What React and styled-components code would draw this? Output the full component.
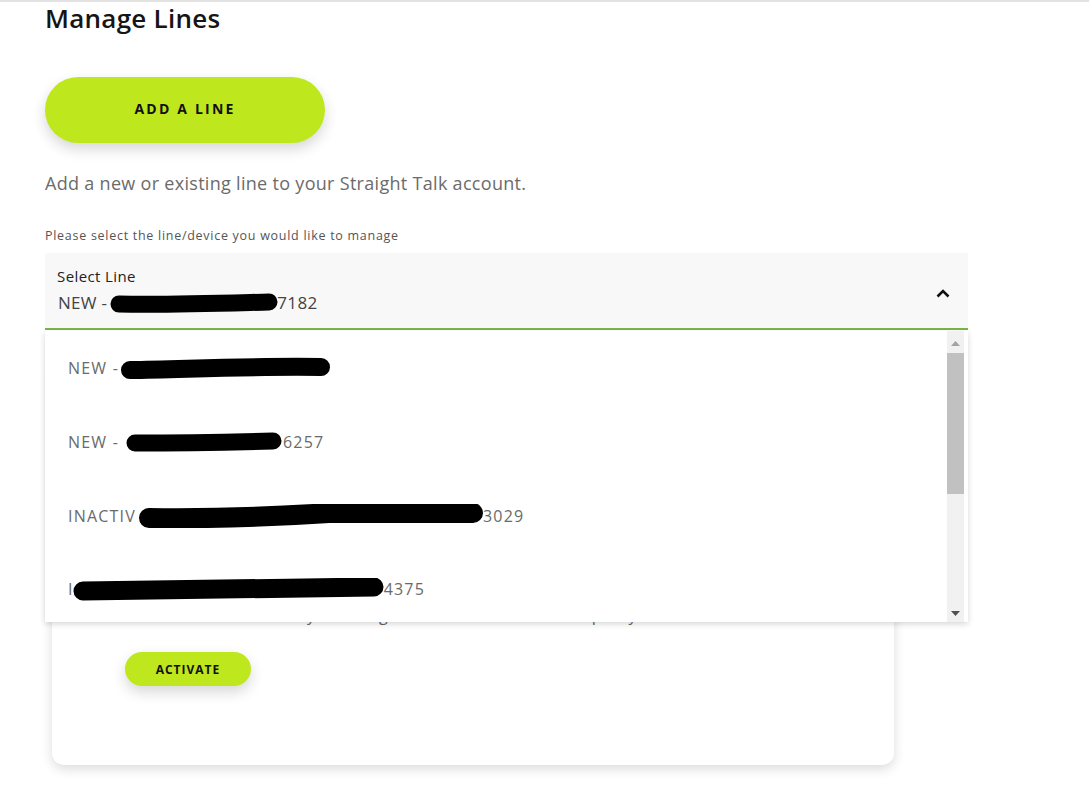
import React from "react";
import styled, { createGlobalStyle } from "styled-components";

const GlobalStyle = createGlobalStyle`
  body {
    margin: 0;
    background: #ffffff;
    font-family: "Open Sans", "Noto Sans", sans-serif;
  }
`;

const Page = styled.div`
  border-top: 2px solid #e2e2e2;
  padding-left: 45px;
  width: 1089px;
  height: 786px;
  box-sizing: border-box;
  overflow: hidden;
`;

const Title = styled.h1`
  margin: 0;
  font-size: 26px;
  line-height: 32px;
  font-weight: 600;
  letter-spacing: 0.25px;
  color: #151515;
`;

const PillButton = styled.button`
  display: flex;
  align-items: center;
  justify-content: center;
  width: ${(p) => p.$width}px;
  height: ${(p) => p.$height}px;
  margin-top: ${(p) => p.$top}px;
  padding: 0 0 ${(p) => p.$lift || 0}px;
  border: none;
  border-radius: ${(p) => p.$height / 2}px;
  background: #bfe71d;
  color: #111;
  font-family: inherit;
  font-weight: 700;
  font-size: ${(p) => p.$size}px;
  letter-spacing: ${(p) => p.$spacing}px;
  box-shadow: 0 6px 14px rgba(0, 0, 0, 0.16);
  cursor: pointer;
`;

const Description = styled.p`
  margin: 28px 0 0;
  font-size: 18px;
  line-height: 24px;
  letter-spacing: 0.3px;
  color: #6b6b6b;
`;

const FieldHint = styled.div`
  margin-top: 33px;
  font-size: 12.5px;
  line-height: 16px;
  letter-spacing: 0.72px;
  color: #555;
`;

const SelectWrap = styled.div`
  position: relative;
  width: 923px;
  margin-top: 9px;
`;

const SelectBox = styled.div`
  display: flex;
  align-items: center;
  height: 75px;
  padding: 0 18px 0 12px;
  background: #f8f8f8;
  border-bottom: 2px solid #78b545;
`;

const SelectText = styled.div`
  flex: 1;
  display: flex;
  flex-direction: column;
  gap: 5px;
`;

const SelectLabel = styled.div`
  font-size: 15px;
  line-height: 20px;
  letter-spacing: 0.4px;
  color: #222;
`;

const SelectValue = styled.div`
  display: flex;
  align-items: center;
  font-size: 17px;
  line-height: 24px;
  letter-spacing: 0.3px;
  color: #444;
  padding-left: 1px;
`;

const Chevron = styled.svg`
  margin-top: 5px;
`;

const Dropdown = styled.div`
  position: absolute;
  top: calc(100% + 1px);
  left: 0;
  right: 0;
  height: 291px;
  display: flex;
  background: #fff;
  box-shadow: 0 2px 6px rgba(0, 0, 0, 0.16);
  z-index: 2;
`;

const OptionList = styled.ul`
  flex: 1;
  list-style: none;
  margin: 0;
  padding: 0;
`;

const Option = styled.li`
  display: flex;
  align-items: center;
  height: ${(p) => (p.$short ? 72 : 74)}px;
  padding-left: 23px;
  font-size: 16px;
  letter-spacing: 1.2px;
  color: #6a6a6a;
`;

const Scrollbar = styled.div`
  width: 17px;
  margin-right: 4px;
  display: flex;
  flex-direction: column;
  background: #f1f1f1;
`;

const ScrollArrow = styled.div`
  height: 17px;
  display: flex;
  align-items: center;
  justify-content: center;
  margin-top: ${(p) => p.$top || 0}px;
`;

const ScrollThumb = styled.div`
  height: 141px;
  margin-top: 1px;
  background: #c1c1c1;
`;

const ScrollTrack = styled.div`
  flex: 1;
`;

const Card = styled.section`
  width: 842px;
  margin: 24px 0 0 7px;
  padding: 32px 73px 79px;
  box-sizing: border-box;
  background: #fff;
  border-radius: 12px;
  box-shadow: 0 4px 12px rgba(0, 0, 0, 0.14);
`;

const DeviceIcon = styled.svg`
  display: block;
  color: #9a9a9a;
`;

const CardTitle = styled.h2`
  margin: 12px 0 105px;
  font-size: 20px;
  line-height: 28px;
  font-weight: 600;
  color: #222;
`;

const CardText = styled.p`
  margin: 0;
  font-size: 16px;
  line-height: 24px;
  color: #666;
  white-space: nowrap;
`;

const Marker = ({ w, h = 22, path, ml = 0 }) => (
  <svg
    width={w}
    height={h}
    viewBox={`0 0 ${w} ${h}`}
    style={{ marginLeft: ml, flexShrink: 0 }}
  >
    <path
      d={path}
      fill="none"
      stroke="#000"
      strokeWidth={h - 4}
      strokeLinecap="round"
      strokeLinejoin="round"
    />
  </svg>
);

const Triangle = ({ up, color }) => (
  <svg width="9" height="5" viewBox="0 0 9 5">
    <path d={up ? "M0 5 L4.5 0 L9 5 Z" : "M0 0 L4.5 5 L9 0 Z"} fill={color} />
  </svg>
);

export default function App() {
  return (
    <>
      <GlobalStyle />
      <Page>
        <Title>Manage Lines</Title>
        <PillButton
          $width={280}
          $height={66}
          $top={43}
          $size={14}
          $spacing={2.2}
          $lift={3}
        >
          ADD A LINE
        </PillButton>
        <Description>
          Add a new or existing line to your Straight Talk account.
        </Description>
        <FieldHint>Please select the line/device you would like to manage</FieldHint>

        <SelectWrap>
          <SelectBox>
            <SelectText>
              <SelectLabel>Select Line</SelectLabel>
              <SelectValue>
                NEW -
                <Marker w={170} h={21} ml={2} path="M10 11 C60 12 120 10 160 9" />
                <span style={{ marginLeft: -2 }}>7182</span>
              </SelectValue>
            </SelectText>
            <Chevron width="14" height="9" viewBox="0 0 14 9">
              <polyline
                points="1.5,7.5 7,2 12.5,7.5"
                fill="none"
                stroke="#111"
                strokeWidth="2.6"
              />
            </Chevron>
          </SelectBox>

          <Dropdown>
            <OptionList>
              <Option>
                NEW -
                <Marker w={211} h={22} ml={1} path="M10 13 C70 12 130 9 201 10" />
              </Option>
              <Option>
                NEW -
                <Marker w={158} h={21} ml={6} path="M10 11 C60 11 110 10 148 9" />
                6257
              </Option>
              <Option>
                INACTIV
                <Marker
                  w={344}
                  h={24}
                  ml={3}
                  path="M10 14 C80 15 130 13 190 9 C250 9 300 9 334 9"
                />
                3029
              </Option>
              <Option $short>
                I
                <Marker w={311} h={23} ml={-1} path="M10 13 C100 12 200 11 301 9" />
                4375
              </Option>
            </OptionList>
            <Scrollbar>
              <ScrollArrow $top={4}>
                <Triangle up color="#a3a3a3" />
              </ScrollArrow>
              <ScrollThumb />
              <ScrollTrack />
              <ScrollArrow>
                <Triangle color="#505050" />
              </ScrollArrow>
            </Scrollbar>
          </Dropdown>
        </SelectWrap>

        <Card>
          <DeviceIcon width="40" height="72" viewBox="0 0 40 72">
            <rect
              x="2"
              y="2"
              width="36"
              height="68"
              rx="6"
              fill="none"
              stroke="currentColor"
              strokeWidth="3"
            />
            <line x1="15" y1="62" x2="25" y2="62" stroke="currentColor" strokeWidth="3" />
          </DeviceIcon>
          <CardTitle>Activate Your Line</CardTitle>
          <CardText>
            Activate the new line on your Straight Talk account to start the plan you chose.
          </CardText>
          <PillButton $width={126} $height={34} $top={25} $size={12} $spacing={1}>
            ACTIVATE
          </PillButton>
        </Card>
      </Page>
    </>
  );
}
